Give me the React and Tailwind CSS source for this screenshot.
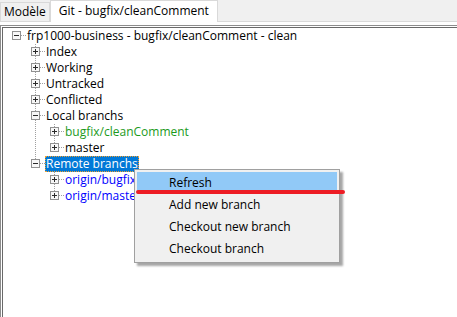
import React from 'react';

const tree = {
  label: 'frp1000-business - bugfix/cleanComment - clean',
  open: true,
  children: [
    { label: 'Index' },
    { label: 'Working' },
    { label: 'Untracked' },
    { label: 'Conflicted' },
    {
      label: 'Local branchs',
      open: true,
      children: [
        { label: 'bugfix/cleanComment', color: 'text-[#1c9a1c]' },
        { label: 'master' },
      ],
    },
    {
      label: 'Remote branchs',
      open: true,
      selected: true,
      children: [
        { label: 'origin/bugfix/cleanComment', color: 'text-[#0000ff]' },
        { label: 'origin/master', color: 'text-[#0000ff]' },
      ],
    },
  ],
};

// Flatten the tree into rows, remembering which ancestor columns keep a line going
function flatten(node, rails, isLast, isRoot, out) {
  out.push({ node, rails, isLast, isRoot });
  if (node.open && node.children) {
    node.children.forEach((child, i) => {
      const last = i === node.children.length - 1;
      flatten(child, [...rails, !isRoot && !isLast], last, false, out);
    });
  }
  return out;
}

const DOT = { stroke: '#a0a0a0', strokeWidth: 1, strokeDasharray: '1 1', shapeRendering: 'crispEdges' };

function Rail({ on }) {
  return (
    <svg width="19" height="16" className="shrink-0">
      {on && <line x1="9.5" y1="0" x2="9.5" y2="16" style={DOT} />}
    </svg>
  );
}

function Expander({ open, isRoot, isLast }) {
  return (
    <svg width="19" height="16" className="shrink-0">
      {!isRoot && <line x1="9.5" y1="0" x2="9.5" y2="3" style={DOT} />}
      {!isRoot && !isLast && <line x1="9.5" y1="12" x2="9.5" y2="16" style={DOT} />}
      <line x1="14" y1="7.5" x2="19" y2="7.5" style={DOT} />
      <rect x="5.5" y="3.5" width="8" height="8" fill="#f7f7f7" stroke="#919191" shapeRendering="crispEdges" />
      <line x1="7" y1="7.5" x2="12" y2="7.5" stroke="#2a2a2a" shapeRendering="crispEdges" />
      {!open && <line x1="9.5" y1="5" x2="9.5" y2="10" stroke="#2a2a2a" shapeRendering="crispEdges" />}
    </svg>
  );
}

function TreeRow({ row }) {
  const { node, rails, isLast, isRoot } = row;
  return (
    <div className="flex h-4 items-center">
      {rails.map((on, i) => (
        <Rail key={i} on={on} />
      ))}
      <Expander open={node.open} isRoot={isRoot} isLast={isLast} />
      {node.selected ? (
        <span className="h-4 leading-[15px] px-[1px] bg-[#0078d7] text-white outline outline-1 outline-dotted outline-[#f0a030] -outline-offset-1 whitespace-nowrap">
          {node.label}
        </span>
      ) : (
        <span className={`h-4 leading-[15px] px-[1px] whitespace-nowrap ${node.color || 'text-black'}`}>
          {node.label}
        </span>
      )}
    </div>
  );
}

function ContextMenu() {
  const items = ['Refresh', 'Add new branch', 'Checkout new branch', 'Checkout branch'];
  return (
    <div className="absolute left-[134px] top-[169px] w-[206px] border border-[#a0a0a0] bg-[#f0f0f0] p-[2px] shadow-[3px_3px_2px_rgba(0,0,0,0.35)]">
      {items.map((item, i) => (
        <div
          key={item}
          className={`h-[22px] flex items-center pl-[32px] text-black ${i === 0 ? 'bg-[#91c9f7]' : ''}`}
        >
          {item}
        </div>
      ))}
    </div>
  );
}

export default function App() {
  const rows = flatten(tree, [], true, true, []);

  return (
    <div
      className="relative w-[457px] h-[317px] overflow-hidden bg-white text-[12px] text-black"
      style={{ fontFamily: '"Open Sans", "Noto Sans", sans-serif' }}
    >
      {/* Tab strip */}
      <div className="flex h-[21px] items-end bg-[#f0f0f0]">
        <div className="h-[19px] px-[3px] flex items-center border border-b-0 border-[#d9d9d9] bg-[#f0f0f0] whitespace-nowrap">
          Modèle
        </div>
        <div className="h-[22px] -mb-[1px] px-[8px] pb-[2px] flex items-center border border-b-0 border-[#d9d9d9] bg-white whitespace-nowrap">
          Git - bugfix/cleanComment
        </div>
      </div>

      {/* Tab page */}
      <div className="border-t border-[#d9d9d9] pt-[3px] h-[296px]">
        <div className="h-full border-t border-l border-[#8c8c8c] pt-[1px] pl-[1px]">
          <div className="h-full border-t border-l border-[#696969] pl-[4px]">
            {rows.map((row, i) => (
              <TreeRow key={i} row={row} />
            ))}
          </div>
        </div>
      </div>

      <ContextMenu />

      {/* Red underline annotation */}
      <div className="absolute left-[136px] top-[190px] w-[209px] h-[4px] rounded-full bg-[#ed1c24]" />
    </div>
  );
}
